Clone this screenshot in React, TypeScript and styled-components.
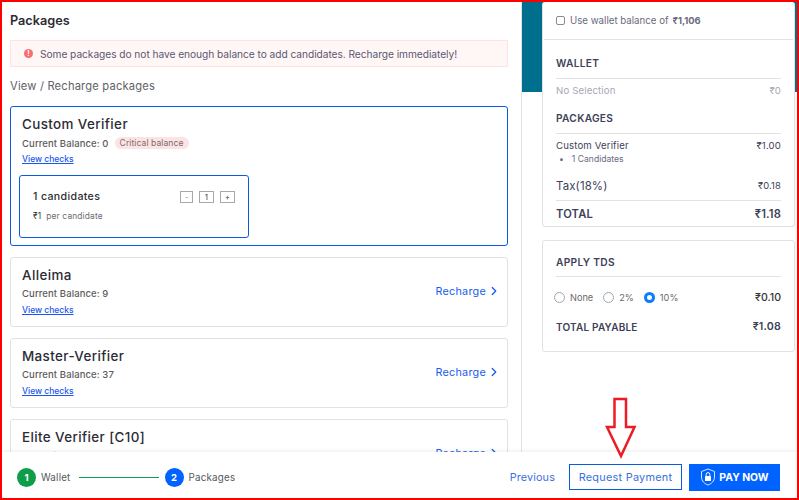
import React, { ReactElement } from 'react';
import styled, { createGlobalStyle } from 'styled-components';
import { ChevronRight } from 'lucide-react';

const GlobalStyle = createGlobalStyle`
  html, body {
    margin: 0;
    padding: 0;
    background: #fff;
  }
  * {
    box-sizing: border-box;
  }
`;

const Frame = styled.div`
  border: 2px solid #ff0000;
  color: #2c2c35;
  font-family: Inter, "Open Sans", "Liberation Sans", sans-serif;
  height: 500px;
  overflow: hidden;
  position: relative;
  width: 799px;
`;
const Columns = styled.div`
  display: flex;
  height: 100%;
`;
const LeftColumn = styled.div`
  border-right: 1px solid #e2e2e2;
  flex: none;
  padding: 11px 13px 0 8px;
  width: 520px;
`;
const PageTitle = styled.h1`
  font-size: 12.7px;
  font-weight: 600;
  line-height: 16px;
  margin: 0 0 11px;
`;
const Alert = styled.div`
  align-items: center;
  background: #fff6f6;
  border: 1px solid #fde3e3;
  color: #5b5670;
  display: flex;
  font-size: 10.2px;
  gap: 7px;
  height: 27px;
  letter-spacing: -0.05px;
  padding-left: 13px;
`;
const AlertDot = styled.span`
  background: #f86d70;
  border-radius: 50%;
  color: #fff;
  display: block;
  flex: none;
  font-size: 7px;
  font-weight: 700;
  height: 9px;
  line-height: 9px;
  text-align: center;
  width: 9px;
`;
const SectionLabel = styled.div`
  color: #5f6368;
  font-size: 11.2px;
  letter-spacing: 0.17px;
  line-height: 16px;
  margin: 11px 0 12px;
`;
const PackageCard = styled.div<{ $active?: boolean }>`
  align-items: center;
  border: 1px solid ${ props => props.$active ? '#0a5be0' : '#e2e2e2' };
  border-radius: 3px;
  display: flex;
  justify-content: space-between;
  margin-bottom: 11px;
  min-height: 70px;
  padding: 0 6px 0 11px;
`;
const ActiveCard = styled(PackageCard)`
  align-items: stretch;
  flex-direction: column;
  height: 140px;
  justify-content: flex-start;
  padding: 8px 10px 0 8px;
`;
const PackageInfo = styled.div<{ $inset?: boolean }>`
  margin-bottom: ${ props => props.$inset ? '0' : '3px' };
  padding-left: ${ props => props.$inset ? '3px' : '0' };
`;
const PackageName = styled.div`
  font-size: 13.4px;
  font-weight: 500;
  letter-spacing: 0.4px;
  line-height: 18px;
`;
const BalanceRow = styled.div`
  align-items: center;
  color: #5c5c5c;
  display: flex;
  font-size: 9.5px;
  font-weight: 500;
  gap: 6px;
  height: 14px;
  letter-spacing: 0.1px;
  margin-top: 3px;
`;
const CriticalTag = styled.span`
  background: #fde4e4;
  border-radius: 7px;
  color: #7a6a6a;
  font-size: 8.5px;
  font-weight: 400;
  line-height: 12px;
  padding: 0 5px;
`;
const ChecksLink = styled.a`
  color: #1a56f0;
  display: block;
  font-size: 8.5px;
  font-weight: 500;
  line-height: 11px;
  margin-top: 4px;
  text-decoration: underline;
  width: fit-content;
`;
const CandidateBox = styled.div`
  border: 1px solid #0a5be0;
  border-radius: 3px;
  height: 63px;
  margin-top: 10px;
  padding: 14px 13px 0;
  width: 230px;
`;
const CandidateTop = styled.div`
  align-items: center;
  display: flex;
  justify-content: space-between;
`;
const CandidateCount = styled.div`
  font-size: 10.6px;
  font-weight: 500;
  letter-spacing: 0.35px;
`;
const Stepper = styled.div`
  display: flex;
  gap: 6px;
`;
const StepperCell = styled.span<{ $wide?: boolean; $muted?: boolean }>`
  border: 1px solid #a8a8a8;
  color: ${ props => props.$muted ? '#999' : '#444' };
  font-size: 8px;
  height: 12px;
  line-height: 10px;
  text-align: center;
  width: ${ props => props.$wide ? '15px' : '13px' };
`;
const PerCandidate = styled.div`
  color: #6d6d6d;
  display: flex;
  font-size: 8.4px;
  gap: 5px;
  letter-spacing: 0.15px;
  margin-top: 8px;
`;
const Strong = styled.span`
  color: #333;
`;
const RechargeLink = styled.a`
  align-items: center;
  color: #1a5cf0;
  display: flex;
  font-size: 10.8px;
  gap: 1px;
  letter-spacing: 0.25px;
  margin-top: -2px;
`;
const RightColumn = styled.div`
  flex: 1;
  padding: 0 2px 0 20px;
  position: relative;
`;
const TealBand = styled.div`
  background: #006f8e;
  height: 90px;
  left: 0;
  position: absolute;
  right: 0;
  top: 0;
`;
const SummaryCard = styled.div`
  background: #fff;
  border: 1px solid #e2e2e2;
  border-radius: 3px;
  color: #3d4159;
  position: relative;
`;
const OrderCard = styled(SummaryCard)`
  border-top: none;
  height: 225px;
`;
const TdsCard = styled(SummaryCard)`
  height: 112px;
  margin-top: 13px;
  padding: 0 13px;
`;
const WalletRow = styled.div`
  align-items: center;
  border-bottom: 1px solid #e2e2e2;
  color: #6a6a80;
  display: flex;
  font-size: 9.7px;
  gap: 4px;
  height: 38px;
  margin: 0 1px;
  padding-left: 12px;
`;
const CheckBox = styled.span`
  border: 1px solid #8a8a8a;
  border-radius: 2px;
  height: 9px;
  margin-right: 1px;
  width: 9px;
`;
const WalletAmount = styled.b`
  font-size: 9.4px;
`;
const OrderBody = styled.div`
  padding: 0 13px;
`;
const GroupHead = styled.div<{ $top: number }>`
  border-bottom: 1px solid #e2e2e2;
  font-size: 10.2px;
  font-weight: 600;
  letter-spacing: 0.3px;
  line-height: 14px;
  margin-top: ${ props => props.$top }px;
  padding-bottom: 8px;
`;
const LineRow = styled.div<{ $top?: number; $muted?: boolean }>`
  align-items: center;
  color: ${ props => props.$muted ? '#a5a8b5' : 'inherit' };
  display: flex;
  font-size: 9.6px;
  justify-content: space-between;
  letter-spacing: 0.15px;
  line-height: 14px;
  margin-top: ${ props => props.$top ?? 0 }px;
`;
const BulletLine = styled.div`
  color: #6a6a80;
  display: flex;
  font-size: 8.6px;
  gap: 8px;
  line-height: 12px;
  padding-left: 3px;
  &::before {
    content: '•';
  }
`;
const TaxRow = styled(LineRow)`
  border-bottom: 1px solid #e2e2e2;
  font-size: 11.4px;
  height: 22px;
  margin-top: 14px;
  padding-bottom: 7px;
`;
const TaxAmount = styled.span`
  font-size: 9.4px;
`;
const TotalRow = styled(LineRow)`
  font-size: 11.2px;
  font-weight: 600;
  margin-top: 6px;
`;
const TdsHead = styled(GroupHead)`
  margin-bottom: 14px;
  padding-bottom: 7px;
`;
const TdsOptions = styled.div`
  align-items: center;
  display: flex;
  justify-content: space-between;
`;
const RadioGroup = styled.div`
  display: flex;
  gap: 10px;
  margin-left: -2px;
`;
const RadioOption = styled.label`
  align-items: center;
  color: #6a6a6a;
  display: flex;
  font-size: 9.2px;
  gap: 5px;
`;
const Radio = styled.span<{ $on?: boolean }>`
  background: #fff;
  border: ${ props => props.$on ? '3.5px solid #0a7cff' : '1px solid #a0a4ad' };
  border-radius: 50%;
  height: 11px;
  width: 11px;
`;
const TdsAmount = styled.span`
  color: #333;
  font-size: 10.6px;
  font-weight: 500;
`;
const PayableRow = styled(LineRow)`
  font-size: 10px;
  font-weight: 600;
  letter-spacing: 0.2px;
  margin-top: 16px;
`;
const PayableAmount = styled.span`
  font-size: 10.6px;
`;
const Footer = styled.div`
  align-items: center;
  background: #fff;
  bottom: 0;
  box-shadow: 0 -1px 4px rgba(0, 0, 0, 0.08);
  display: flex;
  height: 46px;
  justify-content: space-between;
  left: 0;
  padding: 4px 17px 0 15px;
  position: absolute;
  right: 0;
`;
const Steps = styled.div`
  align-items: center;
  display: flex;
`;
const StepDot = styled.span<{ $color: string }>`
  background: ${ props => props.$color };
  border-radius: 50%;
  color: #fff;
  font-size: 9.5px;
  font-weight: 700;
  height: 19px;
  line-height: 19px;
  text-align: center;
  width: 19px;
`;
const StepLabel = styled.span`
  color: #55585e;
  font-size: 9.8px;
  letter-spacing: 0.2px;
  margin-left: 5px;
`;
const StepLine = styled.span`
  background: #0f9d58;
  height: 1px;
  margin: 0 6px 0 8px;
  width: 80px;
`;
const Actions = styled.div`
  align-items: center;
  display: flex;
`;
const PreviousLink = styled.a`
  color: #3a6fe0;
  font-size: 10.8px;
  letter-spacing: 0.15px;
  margin-right: 14px;
`;
const RequestButton = styled.button`
  background: #fff;
  border: 1px solid #0a5be0;
  color: #3a6fe0;
  font-family: inherit;
  font-size: 10.9px;
  height: 26px;
  letter-spacing: 0.25px;
  margin-right: 7px;
  padding: 0;
  width: 113px;
`;
const PayButton = styled.button`
  align-items: center;
  background: #0062ff;
  border: none;
  color: #fff;
  display: flex;
  font-family: inherit;
  font-size: 10.4px;
  font-weight: 700;
  gap: 3px;
  height: 27px;
  justify-content: center;
  padding: 0;
  width: 91px;
`;
const ArrowMark = styled.svg`
  left: 603px;
  pointer-events: none;
  position: absolute;
  top: 395px;
`;

interface PackageRowProps {
  name: string;
  balance: number;
}

function PackageRow({ name, balance }: PackageRowProps): ReactElement {
  return (
    <PackageCard>
      <PackageInfo>
        <PackageName>{ name }</PackageName>
        <BalanceRow>Current Balance: { balance }</BalanceRow>
        <ChecksLink>View checks</ChecksLink>
      </PackageInfo>
      <RechargeLink>Recharge <ChevronRight size={ 14 } strokeWidth={ 2.2 } /></RechargeLink>
    </PackageCard>
  );
}

export default function App(): ReactElement {
  return (
    <Frame>
      <GlobalStyle />
      <Columns>
        <LeftColumn>
          <PageTitle>Packages</PageTitle>
          <Alert><AlertDot>!</AlertDot>Some packages do not have enough balance to add candidates. Recharge immediately!</Alert>
          <SectionLabel>View / Recharge packages</SectionLabel>
          <ActiveCard $active>
            <PackageInfo $inset>
              <PackageName>Custom Verifier</PackageName>
              <BalanceRow>Current Balance: 0 <CriticalTag>Critical balance</CriticalTag></BalanceRow>
              <ChecksLink>View checks</ChecksLink>
            </PackageInfo>
            <CandidateBox>
              <CandidateTop>
                <CandidateCount>1 candidates</CandidateCount>
                <Stepper>
                  <StepperCell $muted>-</StepperCell>
                  <StepperCell $wide>1</StepperCell>
                  <StepperCell $wide>+</StepperCell>
                </Stepper>
              </CandidateTop>
              <PerCandidate><Strong>₹1</Strong> per candidate</PerCandidate>
            </CandidateBox>
          </ActiveCard>
          <PackageRow name="Alleima" balance={ 9 } />
          <PackageRow name="Master-Verifier" balance={ 37 } />
          <PackageRow name="Elite Verifier [C10]" balance={ 4 } />
        </LeftColumn>
        <RightColumn>
          <TealBand />
          <OrderCard>
            <WalletRow><CheckBox />Use wallet balance of <WalletAmount>₹1,106</WalletAmount></WalletRow>
            <OrderBody>
              <GroupHead $top={ 16 }>WALLET</GroupHead>
              <LineRow $top={ 5 } $muted><span>No Selection</span><span>₹0</span></LineRow>
              <GroupHead $top={ 13 }>PACKAGES</GroupHead>
              <LineRow $top={ 5 }><span>Custom Verifier</span><span>₹1.00</span></LineRow>
              <BulletLine>1 Candidates</BulletLine>
              <TaxRow><span>Tax(18%)</span><TaxAmount>₹0.18</TaxAmount></TaxRow>
              <TotalRow><span>TOTAL</span><span>₹1.18</span></TotalRow>
            </OrderBody>
          </OrderCard>
          <TdsCard>
            <TdsHead $top={ 14 }>APPLY TDS</TdsHead>
            <TdsOptions>
              <RadioGroup>
                <RadioOption><Radio />None</RadioOption>
                <RadioOption><Radio />2%</RadioOption>
                <RadioOption><Radio $on />10%</RadioOption>
              </RadioGroup>
              <TdsAmount>₹0.10</TdsAmount>
            </TdsOptions>
            <PayableRow><span>TOTAL PAYABLE</span><PayableAmount>₹1.08</PayableAmount></PayableRow>
          </TdsCard>
        </RightColumn>
      </Columns>
      <Footer>
        <Steps>
          <StepDot $color="#0f9d4a">1</StepDot>
          <StepLabel>Wallet</StepLabel>
          <StepLine />
          <StepDot $color="#0062ff">2</StepDot>
          <StepLabel>Packages</StepLabel>
        </Steps>
        <Actions>
          <PreviousLink>Previous</PreviousLink>
          <RequestButton>Request Payment</RequestButton>
          <PayButton>
            <svg width="16" height="18" viewBox="0 0 15 18" fill="none">
              <path d="M7.5 1 L14 3.5 V9 C14 13 11 15.8 7.5 17 C4 15.8 1 13 1 9 V3.5 Z" stroke="#fff" strokeWidth="1" opacity="0.85" />
              <rect x="4.5" y="8" width="6" height="5" rx="0.6" fill="#fff" />
              <path d="M5.7 8 V6.4 a1.8 1.8 0 0 1 3.6 0 V8" stroke="#fff" strokeWidth="1" />
            </svg>
            PAY NOW
          </PayButton>
        </Actions>
      </Footer>
      <ArrowMark width="36" height="62" viewBox="0 0 36 62">
        <path d="M9.5 2 H21 V30 H29.5 L16 59 L2 30 H9.5 Z" fill="none" stroke="#ed1c24" strokeWidth="2.5" />
      </ArrowMark>
    </Frame>
  );
}
